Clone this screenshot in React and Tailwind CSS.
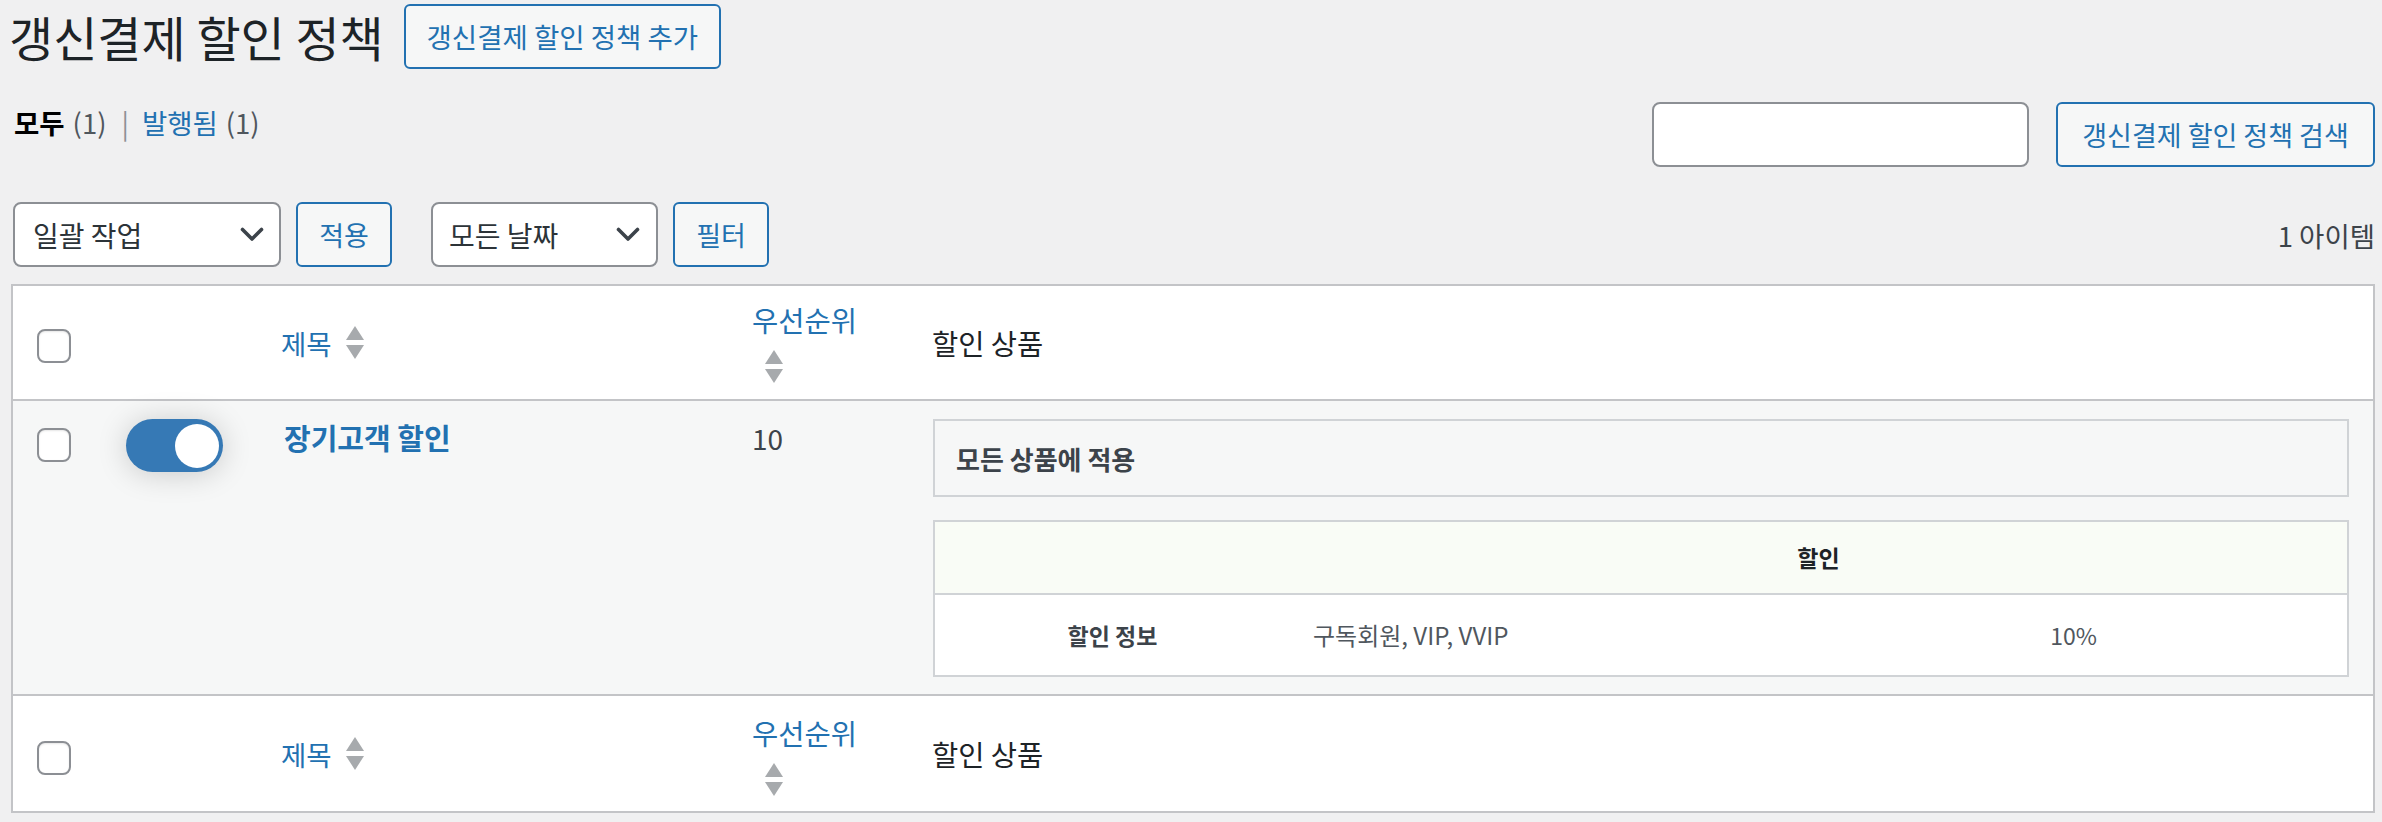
function Checkbox({ className = "" }) {
  return (
    <div
      className={
        "h-[34px] w-[34px] rounded-[8px] border-2 border-[#8c8f94] bg-white shadow-[inset_0_1px_2px_rgba(0,0,0,0.1)] " +
        className
      }
    />
  );
}

function SortArrows({ className = "" }) {
  return (
    <svg width="18" height="33" viewBox="0 0 18 33" className={className}>
      <polygon points="9,0 18,14 0,14" fill="#a7aaad" />
      <polygon points="0,19 18,19 9,33" fill="#a7aaad" />
    </svg>
  );
}

function Chevron() {
  return (
    <svg width="24" height="15" viewBox="0 0 24 15">
      <polyline
        points="2.5,2.5 12,12 21.5,2.5"
        fill="none"
        stroke="#3c434a"
        strokeWidth="3.6"
        strokeLinecap="round"
        strokeLinejoin="round"
      />
    </svg>
  );
}

function HeaderRow({ footer = false }) {
  return (
    <div
      className={
        "grid grid-cols-[90px_160px_470px_180px_1fr] items-center " +
        (footer ? "h-[115px]" : "h-[115px] border-b-2 border-[#c3c4c7]")
      }
    >
      <div className="pl-[24px]">
        <Checkbox className={footer ? "mt-[9px]" : "mt-[6px]"} />
      </div>
      <div />
      <div className="flex items-center pl-[18px]">
        <span className="text-[27.5px] leading-[40px] text-[#2271b1]">제목</span>
        <SortArrows className="ml-[14px]" />
      </div>
      <div className={"flex flex-col pl-[19px] " + (footer ? "mt-[4px]" : "")}>
        <span className="text-[28.5px] leading-[36px] text-[#2271b1]">우선순위</span>
        <SortArrows className="ml-[13px] mt-[12px]" />
      </div>
      <div className="pl-[19px] text-[28.5px] leading-[40px] text-[#1d2327]">할인 상품</div>
    </div>
  );
}

export default function App() {
  return (
    <div className="min-h-[822px] w-full bg-[#f0f0f1] pl-[11px] pr-[7px] font-['Noto_Sans_CJK_KR','Noto_Sans',sans-serif] text-[#3c434a]">
      {/* Title row */}
      <div className="flex items-center pt-[4px]">
        <h1 className="ml-[-2px] text-[48px] font-normal leading-[65px] text-[#1d2327]">
          갱신결제 할인 정책
        </h1>
        <button className="ml-[20px] h-[65px] w-[317px] rounded-[6px] border-2 border-[#2271b1] bg-[#f6f7f7] text-[27.5px] leading-none text-[#2271b1]">
          갱신결제 할인 정책 추가
        </button>
      </div>

      {/* Views + search */}
      <div className="mt-[33px] flex items-start justify-between">
        <div className="flex items-center pl-[3px] text-[27.5px] leading-[40px]">
          <span className="font-bold text-black">모두</span>
          <span className="ml-[8px] text-[#50575e]">(1)</span>
          <span className="ml-[15px] text-[#8c8f94]">|</span>
          <span className="ml-[13px] text-[#2271b1]">발행됨</span>
          <span className="ml-[8px] text-[#50575e]">(1)</span>
        </div>
        <div className="flex gap-[27px]">
          <input
            type="search"
            className="h-[65px] w-[377px] rounded-[8px] border-2 border-[#8c8f94] bg-white px-3 text-[26px] outline-none"
          />
          <button className="h-[65px] w-[319px] rounded-[6px] border-2 border-[#2271b1] bg-[#f6f7f7] text-[27px] leading-none text-[#2271b1]">
            갱신결제 할인 정책 검색
          </button>
        </div>
      </div>

      {/* Tablenav */}
      <div className="mt-[35px] flex h-[65px] items-center">
        <div className="ml-[2px] flex h-[65px] w-[268px] items-center justify-between rounded-[8px] border-2 border-[#8c8f94] bg-white pl-[18px] pr-[15px] text-[28px] text-[#2c3338]">
          <span>일괄 작업</span>
          <Chevron />
        </div>
        <button className="ml-[15px] h-[65px] w-[96px] rounded-[6px] border-2 border-[#2271b1] bg-[#f6f7f7] text-[27px] leading-none text-[#2271b1]">
          적용
        </button>
        <div className="ml-[39px] flex h-[65px] w-[227px] items-center justify-between rounded-[8px] border-2 border-[#8c8f94] bg-white pl-[16px] pr-[16px] text-[28px] text-[#2c3338]">
          <span>모든 날짜</span>
          <Chevron />
        </div>
        <button className="ml-[15px] h-[65px] w-[96px] rounded-[6px] border-2 border-[#2271b1] bg-[#f6f7f7] text-[27px] leading-none text-[#2271b1]">
          필터
        </button>
        <span className="ml-auto text-[27.5px] leading-[40px] text-[#3c434a]">1 아이템</span>
      </div>

      {/* Table */}
      <div className="mt-[17px] border-2 border-[#c3c4c7] bg-white">
        <HeaderRow />

        {/* Data row */}
        <div className="grid grid-cols-[90px_160px_470px_180px_1fr] items-start border-b-2 border-[#c3c4c7] bg-[#f6f7f7]">
          <div className="pl-[24px] pt-[27px]">
            <Checkbox />
          </div>
          <div className="pl-[23px] pt-[18px]">
            <div className="flex h-[53px] w-[97px] items-center justify-end rounded-full bg-[#3679b5] pr-[4px] shadow-[0_2px_30px_rgba(0,0,0,0.18)]">
              <div className="h-[44px] w-[44px] rounded-full bg-white" />
            </div>
          </div>
          <div className="pl-[21px] pt-[16px] text-[29px] font-semibold leading-[40px] text-[#2271b1]">
            장기고객 할인
          </div>
          <div className="pl-[19px] pt-[17px] text-[28px] leading-[40px] text-[#3c434a]">10</div>
          <div className="pb-[17px] pl-[20px] pr-[24px] pt-[18px]">
            <div className="flex h-[78px] items-center border-2 border-[#d0d3d6] bg-[#f6f7f7] pl-[21px] text-[26px] font-bold text-[#3c434a]">
              모든 상품에 적용
            </div>
            <div className="mt-[23px] border-2 border-[#d0d3d6] bg-white">
              <div className="grid h-[73px] grid-cols-[355px_1fr] items-center border-b-2 border-[#d0d3d6] bg-[#f9fcf6]">
                <div />
                <div className="text-center text-[23px] font-bold text-[#1d2327]">할인</div>
              </div>
              <div className="grid h-[80px] grid-cols-[355px_510px_1fr] items-center bg-white text-[23px]">
                <div className="text-center font-bold text-[#3c434a]">할인 정보</div>
                <div className="pl-[23px] text-[24px] text-[#50575e]">구독회원, VIP, VVIP</div>
                <div className="text-center text-[#50575e]">10%</div>
              </div>
            </div>
          </div>
        </div>

        <HeaderRow footer />
      </div>
    </div>
  );
}
